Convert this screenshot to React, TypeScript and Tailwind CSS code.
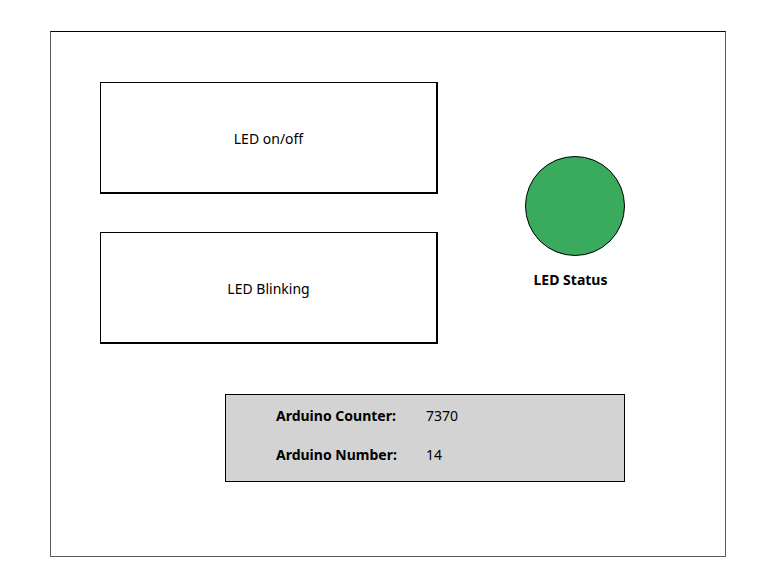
export default function App() {
  return (
    <div className="w-[766px] h-[586px] bg-white pt-[31px] pl-[50px] font-['Segoe_UI','Noto_Sans',sans-serif] text-[14px] leading-[20px] text-black">
      <div className="w-[676px] h-[526px] border border-[#5a5a5a] border-t-black">
        <div className="flex mt-[50px] ml-[49px]">
          {/* Buttons */}
          <div className="flex flex-col gap-[38px]">
            <button className="w-[338px] h-[112px] pt-[2px] bg-white border-black border-t border-l border-r-2 border-b-2 flex items-center justify-center">
              LED on/off
            </button>
            <button className="w-[338px] h-[112px] pt-[2px] bg-white border-black border-t border-l border-r-2 border-b-2 flex items-center justify-center">
              LED Blinking
            </button>
          </div>

          {/* Status */}
          <div className="flex flex-col items-center ml-[87px] mt-[74px]">
            <div className="w-[100px] h-[100px] rounded-full bg-[#3aaa5c] border border-black" />
            <div className="font-bold mt-[14px] -ml-[9px]">LED Status</div>
          </div>
        </div>

        {/* Info panel */}
        <div className="ml-[174px] mt-[50px] w-[400px] h-[88px] bg-[#d3d3d3] border border-black flex flex-col gap-[19px] pt-[11px] pl-[50px]">
          <div className="flex">
            <span className="font-bold w-[150px]">Arduino Counter:</span>
            <span>7370</span>
          </div>
          <div className="flex">
            <span className="font-bold w-[150px]">Arduino Number:</span>
            <span>14</span>
          </div>
        </div>
      </div>
    </div>
  )
}
